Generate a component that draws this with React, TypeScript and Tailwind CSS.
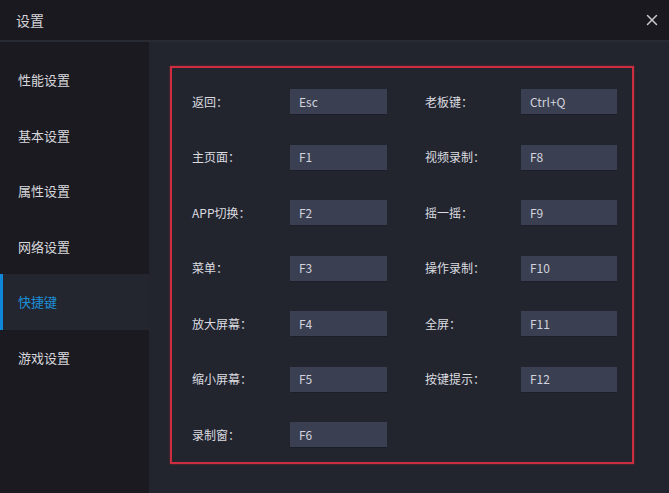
import { X } from "lucide-react";

const menu = ["性能设置", "基本设置", "属性设置", "网络设置", "快捷键", "游戏设置"];

const rows: [string, string, string?, string?][] = [
  ["返回：", "Esc", "老板键：", "Ctrl+Q"],
  ["主页面：", "F1", "视频录制：", "F8"],
  ["APP切换：", "F2", "摇一摇：", "F9"],
  ["菜单：", "F3", "操作录制：", "F10"],
  ["放大屏幕：", "F4", "全屏：", "F11"],
  ["缩小屏幕：", "F5", "按键提示：", "F12"],
  ["录制窗：", "F6"],
];

const font = { fontFamily: '"Noto Sans CJK SC", "Noto Sans", sans-serif' };

function KeyBox({ value, w }: { value: string; w: string }) {
  return (
    <div className={`${w} h-[25px] bg-[#3b3f52] flex items-center pl-[9px] text-[12px] text-[#d2d3dc] shadow-[0_1px_0_#1c1f2a]`}>
      {value}
    </div>
  );
}

export default function App() {
  return (
    <div className="w-[669px] h-[493px] flex flex-col bg-[#22252d] overflow-hidden" style={font}>
      {/* 标题栏 */}
      <div className="h-[42px] shrink-0 flex items-center justify-between pl-[16px] pr-[8px] bg-[#1a1920] border-b-2 border-[#292b34]">
        <span className="text-[14px] text-[#d4d4d8]">设置</span>
        <X className="w-[18px] h-[18px] text-[#c8c8cc]" strokeWidth={2} />
      </div>

      <div className="flex flex-1 min-h-0">
        {/* 侧边栏 */}
        <div className="w-[149px] shrink-0 bg-[#1b1a21] pt-[10px]">
          {menu.map((m) => {
            const ativo = m === "快捷键";
            return (
              <div
                key={m}
                className={`relative h-[55.5px] flex items-center pl-[18px] text-[13px] ${
                  ativo ? "bg-[#23262e] text-[#1d8fd9]" : "text-[#d8d8dc]"
                }`}
              >
                {ativo && <span className="absolute left-0 top-0 bottom-0 w-[3px] bg-[#0f88d9]" />}
                {m}
              </div>
            );
          })}
        </div>

        {/* 内容 */}
        <div className="flex-1 pl-[21px] pt-[24px]">
          <div className="w-[464px] h-[398px] border-2 border-[#cc2e40] shadow-[0_0_2px_#cc2e4080] pt-[21px] pl-[20px] flex flex-col gap-y-[30.5px]">
            {rows.map(([l1, k1, l2, k2]) => (
              <div key={l1} className="flex items-center h-[25px]">
                <div className="w-[98px] text-[12px] text-[#dcdce0]">{l1}</div>
                <KeyBox value={k1} w="w-[97px]" />
                {l2 && (
                  <>
                    <div className="w-[38px]" />
                    <div className="w-[96px] text-[12px] text-[#dcdce0]">{l2}</div>
                    <KeyBox value={k2!} w="w-[96px]" />
                  </>
                )}
              </div>
            ))}
          </div>
        </div>
      </div>
    </div>
  );
}
